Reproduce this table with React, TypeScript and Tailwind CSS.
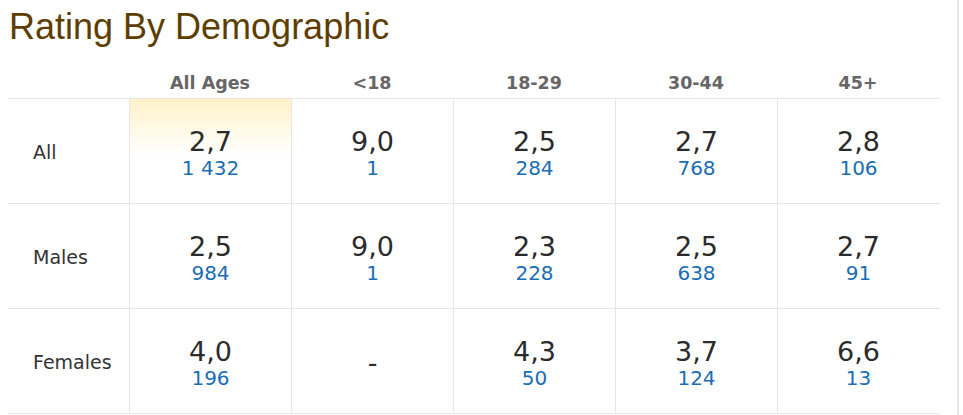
const columns = ["All Ages", "<18", "18-29", "30-44", "45+"];

type Cell = { rating: string; count?: string };

const rows: { label: string; cells: Cell[] }[] = [
  {
    label: "All",
    cells: [
      { rating: "2,7", count: "1 432" },
      { rating: "9,0", count: "1" },
      { rating: "2,5", count: "284" },
      { rating: "2,7", count: "768" },
      { rating: "2,8", count: "106" },
    ],
  },
  {
    label: "Males",
    cells: [
      { rating: "2,5", count: "984" },
      { rating: "9,0", count: "1" },
      { rating: "2,3", count: "228" },
      { rating: "2,5", count: "638" },
      { rating: "2,7", count: "91" },
    ],
  },
  {
    label: "Females",
    cells: [
      { rating: "4,0", count: "196" },
      { rating: "-" },
      { rating: "4,3", count: "50" },
      { rating: "3,7", count: "124" },
      { rating: "6,6", count: "13" },
    ],
  },
];

const verdana = "font-['DejaVu_Sans',Verdana,sans-serif]";

export default function App() {
  return (
    <div className="w-[959px] h-[415px] bg-white border-r-2 border-[#e6e6e6] overflow-hidden">
      <h1 className="pl-[9px] pt-[6px] text-[36px] leading-[42px] text-[#5e3e00] font-['Liberation_Sans',Arial,sans-serif]">
        Rating By Demographic
      </h1>

      <div className={`ml-[8px] mt-[8px] w-[932px] ${verdana}`}>
        {/* header */}
        <div className="flex h-[43px] border-b border-[#e6e6e6]">
          <div className="w-[121px]" />
          {columns.map((c) => (
            <div
              key={c}
              className="w-[162px] flex items-end justify-center pb-[5px] text-[17.5px] leading-[20px] font-bold text-[#666666]"
            >
              {c}
            </div>
          ))}
        </div>

        {rows.map((row, ri) => (
          <div key={row.label} className="flex h-[105px] border-b border-[#e6e6e6]">
            <div className="w-[121px] flex items-center pl-[25px] pt-[3px] text-[19px] text-[#333333]">
              {row.label}
            </div>
            {row.cells.map((cell, ci) => (
              <div
                key={ci}
                className={`w-[162px] border-l border-[#e6e6e6] flex flex-col items-center justify-center pt-[3px] ${
                  ri === 0 && ci === 0 ? "bg-gradient-to-b from-[#fff1c8] to-white to-55%" : ""
                }`}
              >
                <div className="text-[27px] leading-[30px] text-[#2b2b2b]">{cell.rating}</div>
                {cell.count && (
                  <div className="text-[20px] leading-[22px] text-[#1a6db5]">{cell.count}</div>
                )}
              </div>
            ))}
          </div>
        ))}
      </div>
    </div>
  );
}
